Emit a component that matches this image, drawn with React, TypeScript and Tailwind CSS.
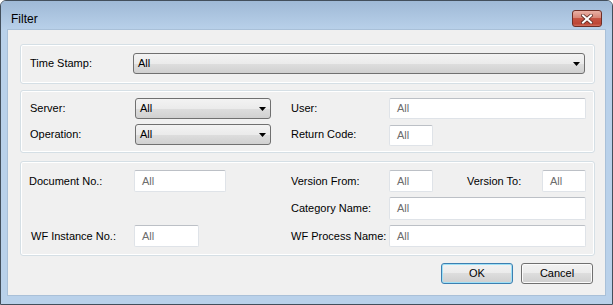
const Combo = ({ className }: { className: string }) => (
  <div
    className={`flex items-center justify-between rounded-[3px] border border-[#707070] bg-[linear-gradient(to_bottom,#f3f3f3_0%,#ebebeb_50%,#dedede_50%,#d0d0d0_100%)] pl-[4px] pr-[4px] text-black ${className}`}
  >
    <span>All</span>
    <svg width="7" height="4" viewBox="0 0 7 4">
      <path d="M0 0h7L3.5 4z" fill="#000" />
    </svg>
  </div>
);

const Field = ({ className }: { className: string }) => (
  <div
    className={`flex items-center rounded-[2px] border border-[#dfe3e8] border-t-[#bcc0c6] bg-white pl-[7px] text-[#6d6d6d] ${className}`}
  >
    All
  </div>
);

const Group = ({ className, children }: { className: string; children: React.ReactNode }) => (
  <div className={`rounded-[3px] border border-[#d5dfe5] shadow-[inset_0_0_0_1px_#ffffff] ${className}`}>
    {children}
  </div>
);

const Button = ({ label, primary }: { label: string; primary?: boolean }) => (
  <div
    className={`flex h-[21px] w-[72px] items-center justify-center rounded-[3px] border bg-[linear-gradient(to_bottom,#f2f2f2_0%,#ebebeb_50%,#dddddd_50%,#cfcfcf_100%)] text-black ${
      primary ? "border-[#3c7fb1] shadow-[inset_0_0_0_1px_#9fe0f6]" : "border-[#707070] shadow-[inset_0_0_0_1px_#fbfbfb]"
    }`}
  >
    {label}
  </div>
);

export default function App() {
  return (
    <div className="flex h-[305px] w-[613px] flex-col rounded-t-[6px] border border-[#434f5c] bg-[#b9d1ea] font-['Liberation_Sans',Arial,sans-serif] text-[11px] leading-none text-black">
      <div className="flex h-[29px] items-start justify-between rounded-t-[5px] bg-gradient-to-b from-[#9fb9d6] to-[#b9d1ea] pl-[10px] pr-[10px]">
        <span className="mt-[12px] text-[12px]">Filter</span>
        <div className="mt-[9px] flex h-[17px] w-[30px] items-center justify-center rounded-[3px] border border-[#6e2e26] bg-[linear-gradient(to_bottom,#e9b1a6_0%,#d88677_45%,#c65443_50%,#bd4636_85%,#d0705f_100%)]">
          <svg width="12" height="10" viewBox="0 0 12 10">
            <path d="M2 1.5L10 8.5M10 1.5L2 8.5" stroke="#5b2a24" strokeWidth="3.6" strokeLinecap="square" />
            <path d="M2 1.5L10 8.5M10 1.5L2 8.5" stroke="#ffffff" strokeWidth="2" strokeLinecap="square" />
          </svg>
        </div>
      </div>

      <div className="flex-1 px-[7px] pb-[9px]">
        <div className="flex h-[265px] flex-col bg-[#f0f0f0] pl-[12px] pr-[10px] pt-[14px] shadow-[0_0_0_1px_#a9c0d8]">
          <Group className="h-[40px] pl-[9px] pt-[8px]">
            <div className="flex items-center">
              <span className="w-[103px]">Time Stamp:</span>
              <Combo className="h-[21px] w-[452px]" />
            </div>
          </Group>

          <Group className="mt-[6px] h-[63px] pl-[9px] pt-[7px]">
            <div className="grid grid-cols-[105px_156px_98px_197px] items-center gap-y-[4px]">
              <span>Server:</span>
              <Combo className="h-[21px] w-[136px]" />
              <span>User:</span>
              <Field className="h-[21px] w-[197px]" />
              <span>Operation:</span>
              <Combo className="h-[21px] w-[136px]" />
              <span>Return Code:</span>
              <Field className="mt-[2px] h-[21px] w-[44px]" />
            </div>
          </Group>

          <Group className="mt-[8px] h-[95px] pl-[8px] pt-[8px]">
            <div className="grid grid-cols-[105px_157px_98px_197px] grid-rows-[22px_23px_22px] items-center gap-y-[5px]">
              <span>Document No.:</span>
              <Field className="h-[22px] w-[92px]" />
              <span>Version From:</span>
              <div className="flex items-center">
                <Field className="h-[22px] w-[44px]" />
                <span className="ml-[34px] w-[75px]">Version To:</span>
                <Field className="h-[22px] w-[44px]" />
              </div>
              <span />
              <span />
              <span>Category Name:</span>
              <Field className="h-[23px] w-[197px]" />
              <span className="pl-[2px]">WF Instance No.:</span>
              <Field className="h-[22px] w-[65px]" />
              <span>WF Process Name:</span>
              <Field className="h-[22px] w-[197px]" />
            </div>
          </Group>

          <div className="mt-[7px] flex justify-end gap-[8px] pr-[2px]">
            <Button label="OK" primary />
            <Button label="Cancel" />
          </div>
        </div>
      </div>
    </div>
  );
}
